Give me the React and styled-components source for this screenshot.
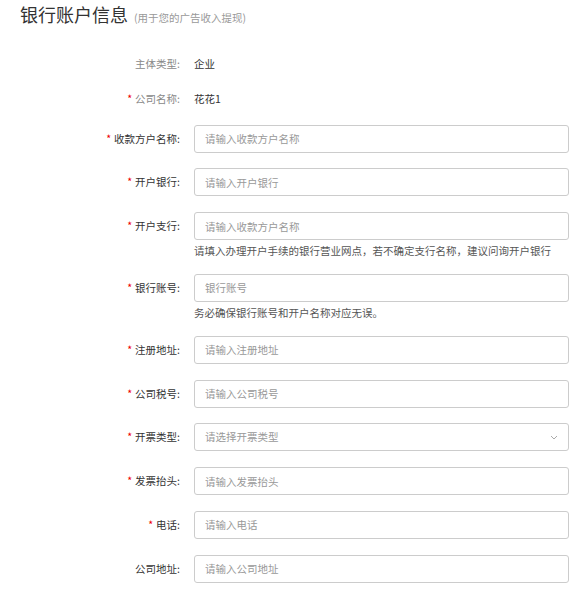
import styled, { createGlobalStyle } from "styled-components";

const Global = createGlobalStyle`
  body {
    margin: 0;
    background: #fff;
    font-family: "Noto Sans CJK SC", "Liberation Sans", sans-serif;
  }
`;

const Page = styled.div`
  padding: 0 0 0 20px;
  width: 583px;
  box-sizing: border-box;
`;

const Header = styled.div`
  display: flex;
  align-items: baseline;
  height: 28px;
  line-height: 28px;
`;

const Title = styled.h2`
  margin: 0;
  font-size: 18px;
  font-weight: normal;
  color: #333;
`;

const Sub = styled.span`
  margin-left: 6px;
  font-size: 10.5px;
  color: #999;
`;

const Form = styled.div`
  display: flex;
  flex-direction: column;
  gap: 15.8px;
  padding-top: 26px;
`;

const Row = styled.div`
  display: grid;
  grid-template-columns: 160px 375px;
  column-gap: 14px;
  align-items: start;
`;

const Label = styled.label`
  text-align: right;
  font-size: 10.5px;
  line-height: ${(p) => (p.$plain ? "19.5px" : "28px")};
  color: ${(p) => (p.$plain ? "#888" : "#333")};
  white-space: nowrap;
`;

const Star = styled.span`
  color: #e00;
  margin-right: 3px;
`;

const Value = styled.div`
  font-size: 10.5px;
  line-height: 19.5px;
  color: #333;
`;

const Field = styled.div`
  display: flex;
  flex-direction: column;
`;

const Input = styled.input`
  box-sizing: border-box;
  width: 375px;
  height: 28px;
  padding: 0 10px;
  border: 1px solid #ccc;
  border-radius: 3px;
  font-family: inherit;
  font-size: 10.5px;
  color: #333;
  outline: none;
  &::placeholder {
    color: #999;
  }
`;

const Select = styled.div`
  box-sizing: border-box;
  width: 375px;
  height: 28px;
  padding: 0 10px;
  border: 1px solid #ccc;
  border-radius: 3px;
  font-size: 10.5px;
  line-height: 26px;
  color: #999;
  display: flex;
  justify-content: space-between;
  align-items: center;
`;

const Help = styled.div`
  margin-top: 3px;
  font-size: 10.5px;
  line-height: 15px;
  color: #555;
  white-space: nowrap;
`;

const Chevron = () => (
  <svg width="8" height="5" viewBox="0 0 8 5" fill="none">
    <path d="M1 1l3 3 3-3" stroke="#aaa" strokeWidth="1" />
  </svg>
);

const fields = [
  { label: "收款方户名称", ph: "请输入收款方户名称", req: true },
  { label: "开户银行", ph: "请输入开户银行", req: true },
  {
    label: "开户支行",
    ph: "请输入收款方户名称",
    req: true,
    help: "请填入办理开户手续的银行营业网点，若不确定支行名称，建议问询开户银行",
  },
  { label: "银行账号", ph: "银行账号", req: true, help: "务必确保银行账号和开户名称对应无误。" },
  { label: "注册地址", ph: "请输入注册地址", req: true },
  { label: "公司税号", ph: "请输入公司税号", req: true },
  { label: "开票类型", ph: "请选择开票类型", req: true, select: true },
  { label: "发票抬头", ph: "请输入发票抬头", req: true },
  { label: "电话", ph: "请输入电话", req: true },
  { label: "公司地址", ph: "请输入公司地址" },
];

export default function App() {
  return (
    <Page>
      <Global />
      <Header>
        <Title>银行账户信息</Title>
        <Sub>(用于您的广告收入提现)</Sub>
      </Header>
      <Form>
        <Row>
          <Label $plain>主体类型:</Label>
          <Value>企业</Value>
        </Row>
        <Row>
          <Label $plain>
            <Star>*</Star>公司名称:
          </Label>
          <Value>花花1</Value>
        </Row>
        {fields.map((f) => (
          <Row key={f.label}>
            <Label>
              {f.req && <Star>*</Star>}
              {f.label}:
            </Label>
            <Field>
              {f.select ? (
                <Select>
                  <span>{f.ph}</span>
                  <Chevron />
                </Select>
              ) : (
                <Input placeholder={f.ph} />
              )}
              {f.help && <Help>{f.help}</Help>}
            </Field>
          </Row>
        ))}
      </Form>
    </Page>
  );
}
